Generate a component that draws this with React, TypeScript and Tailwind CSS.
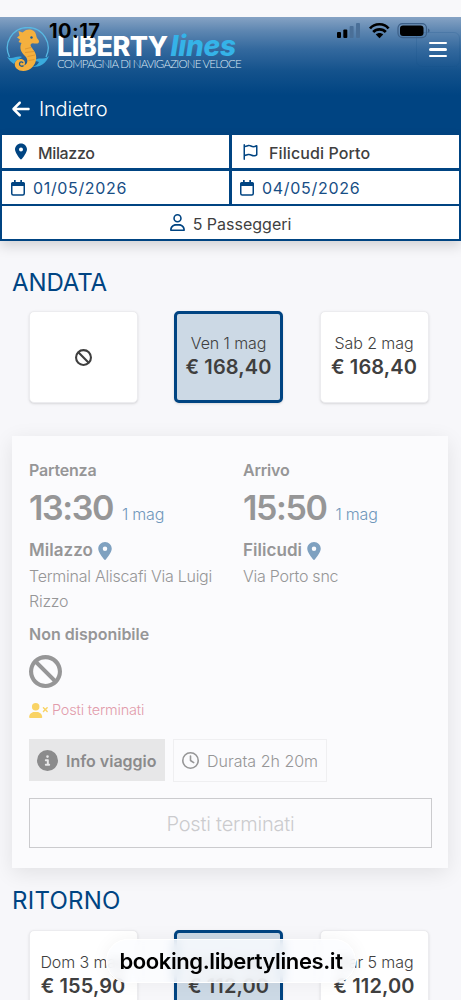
import React from 'react';
import { FaArrowLeft, FaBan, FaCircleInfo, FaLocationDot, FaUserXmark, FaRegUser, FaRegClock, FaRegFlag } from 'react-icons/fa6';

function Seahorse() {
  return (
    <svg className="block h-[46px] w-[44px]" viewBox="0 0 44 46" fill="none">
      <path d="M3.500 30A20.400 20.400 0 1 1 40 30" stroke="#58b9e3" strokeWidth="1.300" />
      <path d="M1 30c6 3 9-2 15 0-3 2-6 3-8 7-3-2-5-4-7-7zM28 34c5-5 9 0 15-5-3 8-9 11-17 11 4-1 6-3 7-5-2-1-3-1-5-1z" fill="#3aabdd" />
      <path
        d="M12.500 4l4 1.500L20 3c4-1.500 9 0 10 4.500.5 2 .5 3.500 2.500 5.500 1 1 .5 3-1 3.500-3 .5-5-1-6.500.5-1.500 2 1.500 4 3.500 7.500 3 5 2 11-2 15.500-4 4.500-12 5.500-16 1.500-4-4.500-.5-10.500 5-9.500 3.500.7 4.500 4.500 2.500 6.500 4-1.500 4.500-6 1-9.500-4-4-6-8-3.500-13l-3-1 1.500-2.500-3-2 2.500-2z"
        fill="#f5b03e"
      />
      <path d="M17.500 38.500c-1.500 1.500-4.500.5-4-2 .5-2 3-2 3.500-.5" stroke="#1c5a92" strokeWidth="1.300" />
      <circle cx="25.500" cy="10.500" r="1.200" fill="#1c5a92" />
      <path d="M19 22l6-1.500M19 25.500l9-1M21.500 29.500l7.500-1.500M22.500 33.500l6-1" stroke="#d9912d" strokeWidth="0.800" />
    </svg>
  );
}

function Calendar() {
  return (
    <svg className="mt-[2px] block h-4 w-[14px] shrink-0" viewBox="0 0 14 16" fill="none">
      <rect x="0.750" y="2.750" width="12.500" height="12.300" rx="1.500" stroke="#004482" strokeWidth="1.500" />
      <path d="M0 6V4c0-1 .8-2 2-2h10c1.200 0 2 1 2 2v2zM3 0h1.700v3H3zM9.300 0H11v3H9.300z" fill="#004482" />
    </svg>
  );
}

function StatusIcons() {
  return (
    <svg className="block h-[17px] w-[96px]" viewBox="0 0 96 17" fill="none">
      <rect x="1" y="10" width="4" height="6" rx="1" fill="#000" />
      <rect x="7.300" y="7.500" width="4" height="8.500" rx="1" fill="#000" />
      <rect x="13.600" y="4" width="4" height="12" rx="1" fill="#4a6f98" />
      <rect x="20" y="1" width="4" height="15" rx="1" fill="#4a6f98" />
      <path d="M34 6.500C38.500 0.800 48.500 0.800 52.500 6.500M37.200 10c3.300-3.600 9.300-3.600 12.600 0" stroke="#000" strokeWidth="2.700" />
      <path d="M39.800 12.500c2-2 5.400-2 7.400 0l-3.700 3.800z" fill="#000" />
      <rect x="62" y="1.600" width="28.500" height="14" rx="4.500" stroke="#3c5f87" strokeWidth="1.200" />
      <rect x="64" y="3.500" width="23.500" height="10.500" rx="3" fill="#000" />
      <path d="M92 6.500c2.200.8 2.200 3.400 0 4.200z" fill="#3c5f87" />
    </svg>
  );
}

function Fare({ day, price, selected = false }: { day?: string; price?: string; selected?: boolean }) {
  return (
    <div
      className={
        selected
          ? 'flex h-[92px] w-[109px] shrink-0 flex-col items-center rounded-[5px] border-[3.500px] border-[#004482] bg-[#ccd9e5] pt-[17px] text-[#3f3f3f] shadow-sm'
          : 'flex h-[92px] w-[109px] shrink-0 flex-col items-center rounded-[5px] border border-[#ececef] bg-white pt-[19px] text-[#3f3f3f] shadow-sm'
      }
    >
      {day ? (
        <>
          <span className="text-[16px] leading-[24px] font-light tracking-[-0.1px] whitespace-nowrap">{day}</span>
          <span className="text-[20px] leading-[25px] font-semibold tracking-[0.1px] whitespace-nowrap">{price}</span>
        </>
      ) : (
        <FaBan className="mt-[18px] h-[17px] w-[17px]" />
      )}
    </div>
  );
}

function Stop({ label, time, place, address }: { label: string; time: string; place: string; address: string }) {
  return (
    <div className="w-[214px] shrink-0">
      <div className="h-[24px] text-[16px] leading-[24px] font-semibold tracking-[-0.2px]">{label}</div>
      <div className="flex h-[52px] items-baseline">
        <span className="text-[34px] leading-[52px] font-semibold tracking-[-1.400px]">{time}</span>
        <span className="ml-[9px] text-[16px] font-light tracking-[-0.2px] text-[#6f97bb]">1 mag</span>
      </div>
      <div className="flex h-[33px] items-center gap-[5px]">
        <span className="text-[17px] font-semibold tracking-[0.050px]">{place}</span>
        <FaLocationDot className="h-[18px] w-[14px] text-[#7fa1c0]" />
      </div>
      <div className="-mt-[3px] w-[190px] text-[16px] leading-[25px] font-light tracking-[-0.250px]">{address}</div>
    </div>
  );
}

export default function App() {
  return (
    <div className="relative h-[1000px] w-[461px] overflow-hidden bg-[#f7f7fa] font-['Inter',sans-serif]">
      <div className="h-[17px] bg-[#f8f8fa]" />
      <header className="h-[118px] bg-[linear-gradient(180deg,#86a3c4_0px,#5d86b1_14px,#34699e_32px,#14528c_54px,#004482_78px)]">
        <div className="flex h-[61px] justify-between">
          <div className="flex">
            <div className="w-[57px] pt-[10px] pl-[6px]">
              <Seahorse />
            </div>
            <div className="pt-[11px] text-white">
              <div className="flex h-[30px] items-baseline text-[27px] leading-[36px] font-extrabold whitespace-nowrap">
                <span className="tracking-[-0.500px]">LIBERTY</span>
                <span className="ml-[3px] text-[28px] tracking-[-0.200px] text-[#35b3e8] italic">lines</span>
              </div>
              <div className="font-['Lato',sans-serif] text-[11.500px] leading-[12px] font-light tracking-[-0.780px] whitespace-nowrap text-[#dce9f5]">
                COMPAGNIA DI NAVIGAZIONE VELOCE
              </div>
            </div>
          </div>
          <div className="mt-[15px] mr-px flex h-[35px] w-[44px] flex-col items-center justify-center gap-[4px] rounded-md border border-[#134e88]/20">
            <i className="block h-[2.500px] w-[18px] rounded bg-white" />
            <i className="block h-[2.500px] w-[18px] rounded bg-white" />
            <i className="block h-[2.500px] w-[18px] rounded bg-white" />
          </div>
        </div>
        <div className="flex h-[62px] items-center gap-[8px] pl-[11px] text-white">
          <FaArrowLeft className="h-[20px] w-[20px]" />
          <span className="text-[20px] font-light tracking-[-0.2px]">Indietro</span>
        </div>
      </header>

      <section className="grid h-[106px] grid-cols-[227px_227px] grid-rows-[33px_33px_33px] gap-x-[3px] gap-y-[2.500px] bg-[#004482] pl-[2px] text-[16px] text-[#3f3f3f] shadow-[0_5px_12px_rgba(0,0,0,0.15)]">
        <div className="flex items-center bg-white pl-[13px] font-medium">
          <FaLocationDot className="h-[17px] w-[12px] text-[#004482]" />
          <span className="mt-[2px] ml-[11px] tracking-[-0.350px]">Milazzo</span>
        </div>
        <div className="flex items-center bg-white pl-[11px] font-medium">
          <FaRegFlag className="h-[16px] w-[15px] text-[#004482]" />
          <span className="mt-[2px] ml-[11px] tracking-[0.100px]">Filicudi Porto</span>
        </div>
        <div className="flex items-center bg-white pl-[9px] text-[#174e85]">
          <Calendar />
          <span className="mt-[2px] ml-[8px] tracking-[0.650px]">01/05/2026</span>
        </div>
        <div className="flex items-center bg-white pl-[8px] text-[#174e85]">
          <Calendar />
          <span className="mt-[2px] ml-[8px] tracking-[0.700px]">04/05/2026</span>
        </div>
        <div className="col-span-2 flex items-center justify-center bg-white">
          <FaRegUser className="h-[17px] w-[15px] text-[#004482]" />
          <span className="mt-[2px] ml-[8px]">5 Passeggeri</span>
        </div>
      </section>

      <h2 className="mt-[24px] h-[36px] pl-[12px] text-[24px] leading-[36px] tracking-[-0.1px] text-[#004482]">ANDATA</h2>
      <div className="mt-[10px] flex gap-[36.500px] pl-[28.500px]">
        <Fare />
        <Fare day="Ven 1 mag" price="€ 168,40" selected />
        <Fare day="Sab 2 mag" price="€ 168,40" />
      </div>

      <article className="mt-[33px] ml-[12px] h-[432px] w-[436px] bg-[#fbfbfd] px-[17px] pt-[22px] text-[#969697] shadow-[0_5px_20px_rgba(0,0,0,0.09)]">
        <div className="flex h-[164px]">
          <Stop label="Partenza" time="13:30" place="Milazzo" address="Terminal Aliscafi Via Luigi Rizzo" />
          <Stop label="Arrivo" time="15:50" place="Filicudi" address="Via Porto snc" />
        </div>
        <div className="text-[16px] leading-[24px] font-semibold">Non disponibile</div>
        <FaBan className="mt-[9px] h-[33px] w-[33px]" />
        <div className="mt-[10px] flex h-[24px] items-center text-[14.500px] font-light text-[#e29cab]">
          <FaUserXmark className="h-[15px] w-[19px] text-[#f9d365]" />
          <span className="ml-[4px] tracking-[-0.2px]">Posti terminati</span>
        </div>
        <div className="mt-[16px] flex h-[44px] items-center gap-[8px]">
          <div className="flex h-[42px] w-[136px] items-center bg-[#e7e7e8] pl-[8px] text-[16px] font-semibold whitespace-nowrap text-[#8b8b8c]">
            <FaCircleInfo className="h-[21px] w-[21px] shrink-0" />
            <span className="mt-px ml-[8px]">Info viaggio</span>
          </div>
          <div className="flex h-[43px] w-[154px] items-center border border-[#efeff1] pl-[8px] text-[16px] font-light whitespace-nowrap">
            <FaRegClock className="h-[17px] w-[17px] shrink-0" />
            <span className="mt-px ml-[8px]">Durata 2h 20m</span>
          </div>
        </div>
        <div className="mt-[16px] flex h-[50px] w-[403px] items-center justify-center border border-[#cbcbce] text-[20px] font-light tracking-[-0.2px] text-[#cbcbce]">
          <span className="mt-px">Posti terminati</span>
        </div>
      </article>

      <h2 className="mt-[14px] h-[36px] pl-[12px] text-[24px] leading-[38px] tracking-[0.250px] text-[#004482]">RITORNO</h2>
      <div className="mt-[12px] flex gap-[36.500px] pl-[28.500px]">
        <Fare day="Dom 3 mag" price="€ 155,90" />
        <Fare day="Lun 4 mag" price="€ 112,00" selected />
        <Fare day="Mar 5 mag" price="€ 112,00" />
      </div>

      <div className="absolute top-[21px] left-[49px] text-[20px] leading-[20px] font-bold tracking-[0.450px] text-black">10:17</div>
      <div className="absolute top-[22px] left-[336px]">
        <StatusIcons />
      </div>
      <div className="absolute top-[939px] left-[106px] flex h-[44px] w-[250px] items-center justify-center rounded-full border border-white bg-[#fbfdff]/80 text-[22px] font-semibold tracking-[-0.400px] whitespace-nowrap text-black shadow-[0_0_18px_rgba(0,0,0,0.05)] backdrop-blur-[5px]">
        booking.libertylines.it
      </div>
    </div>
  );
}
